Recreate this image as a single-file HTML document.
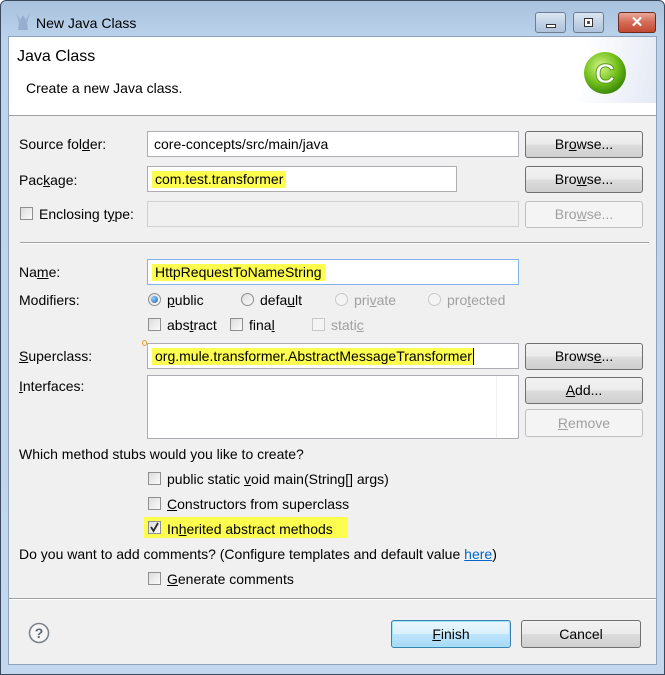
<!DOCTYPE html>
<html><head><meta charset="utf-8"><style>
*{margin:0;padding:0;box-sizing:border-box}
body{width:665px;height:675px;overflow:hidden;font-family:"Liberation Sans",sans-serif;font-size:14px;color:#000;background:#fff}
.win{position:absolute;left:0;top:0;width:665px;height:675px;border:1px solid #3a4a5e;border-radius:6px 6px 0 0;background:linear-gradient(#a9c2dd,#bcd3ec 40px,#c3d8ef);}
.client{position:absolute;left:8px;top:36px;width:649px;height:629px;background:#f0f0f0;border:1px solid #8ea3bd}
.a{position:absolute;white-space:nowrap;line-height:16px}
.field{position:absolute;background:#fff;border:1px solid #abadb3;border-top-color:#abadb3}
.dis{background:#f0f0f0;border-color:#d0d0d0}
.btn{position:absolute;border:1px solid #707070;border-radius:3px;background:linear-gradient(#f2f2f2 0,#ebebeb 50%,#dddddd 50%,#cfcfcf);text-align:center;line-height:24px}
.bdis{border-color:#c0c0c0;background:#f4f4f4;color:#a0a0a0}
.cb{position:absolute;width:13px;height:13px;border:1px solid #8e8f8f;background:linear-gradient(135deg,#dcdcdc,#fbfbfb)}
.rb{position:absolute;width:13px;height:13px;border:1px solid #8e8f8f;border-radius:50%;background:linear-gradient(135deg,#dcdcdc,#fbfbfb)}
.gr{color:#a0a0a0}
.hl{background:#fdfd50}
.sep{position:absolute;left:19px;width:625px;height:2px;border-top:1px solid #a0a0a0;border-bottom:1px solid #fff}
u{text-decoration:underline}
</style></head><body>
<div class="win">
 <svg style="position:absolute;left:13px;top:10px" width="18" height="20"><path d="M2 1 L6 9 L9 4 L12 9 L16 1 L13 12 L14 19 L4 19 L5 12 Z" fill="#8fa8c8" opacity=".8"/></svg>
 <div class="a" style="left:35px;top:14px;font-size:14px">New Java Class</div>
 <div style="position:absolute;left:534px;top:11px;width:31px;height:21px;border:1px solid #6b7d94;border-radius:3px;background:linear-gradient(#dbe6f2,#c3d3e6 50%,#aec2da)"><div style="position:absolute;left:10px;top:11px;width:10px;height:4px;border:1px solid #333;background:#fff"></div></div>
 <div style="position:absolute;left:572px;top:11px;width:31px;height:21px;border:1px solid #6b7d94;border-radius:3px;background:linear-gradient(#dbe6f2,#c3d3e6 50%,#aec2da)"><div style="position:absolute;left:10px;top:5px;width:9px;height:9px;border:1px solid #333;background:#fff"><div style="margin:2px;width:3px;height:3px;background:#555"></div></div></div>
 <div style="position:absolute;left:617px;top:11px;width:38px;height:21px;border:1px solid #6a2a20;border-radius:3px;background:linear-gradient(#e8a79a,#d46a55 50%,#c14a33);color:#fff;font-weight:bold;text-align:center;line-height:19px;font-size:15px">✕</div>
</div>
<div class="client">
 <div style="position:absolute;left:0;top:0;width:647px;height:79px;background:#fff;border-bottom:1px solid #a0a0a0"></div>
 <div style="position:absolute;left:540px;top:0;width:107px;height:66px;background:linear-gradient(100deg,#fff 30%,#e4e9f4)"></div>
 <svg style="position:absolute;left:573px;top:13px" width="46" height="46"><defs><radialGradient id="g" cx="40%" cy="35%" r="65%"><stop offset="0" stop-color="#d6f58a"/><stop offset=".6" stop-color="#74c21c"/><stop offset="1" stop-color="#3d8a0a"/></radialGradient></defs><circle cx="23" cy="23" r="21" fill="url(#g)"/><text x="23" y="33" text-anchor="middle" font-family="Liberation Sans" font-weight="bold" font-size="28" fill="#fff" stroke="#5a9c1a" stroke-width="1">C</text></svg>
 <div class="a" style="left:8px;top:12px;font-size:16px">Java Class</div>
 <div class="a" style="left:17px;top:43px">Create a new Java class.</div>

 <div class="a" style="left:10px;top:99px">Source fol<u>d</u>er:</div>
 <div class="field" style="left:138px;top:94px;width:372px;height:26px"><span class="a" style="left:6px;top:4px">core-concepts/src/main/java</span></div>
 <div class="btn" style="left:516px;top:94px;width:118px;height:27px">Br<u>o</u>wse...</div>

 <div class="a" style="left:10px;top:135px">Pac<u>k</u>age:</div>
 <div class="field" style="left:138px;top:129px;width:310px;height:26px"><span class="a hl" style="left:4px;top:4px;padding:0 3px 1px">com.test.transformer</span></div>
 <div class="btn" style="left:516px;top:129px;width:118px;height:27px">Bro<u>w</u>se...</div>

 <div class="cb" style="left:11px;top:170px"></div>
 <div class="a" style="left:30px;top:169px">Enclosing t<u>y</u>pe:</div>
 <div class="field dis" style="left:138px;top:164px;width:372px;height:26px"></div>
 <div class="btn bdis" style="left:516px;top:164px;width:118px;height:27px">Bro<u>w</u>se...</div>

 <div class="sep" style="left:11px;top:205px;width:629px"></div>

 <div class="a" style="left:10px;top:227px">Na<u>m</u>e:</div>
 <div class="field" style="left:138px;top:222px;width:372px;height:26px;border-color:#7eb4ea"><span class="a hl" style="left:4px;top:4px;padding:0 3px 1px">HttpRequestToNameString</span></div>

 <div class="a" style="left:10px;top:255px">Modifiers:</div>
 <div class="rb" style="left:139px;top:256px"><div style="margin:2px;width:7px;height:7px;border-radius:50%;background:radial-gradient(circle at 35% 35%,#8fd0ff,#1d5fa8)"></div></div>
 <div class="a" style="left:158px;top:255px"><u>p</u>ublic</div>
 <div class="rb" style="left:232px;top:256px"></div>
 <div class="a" style="left:251px;top:255px">defa<u>u</u>lt</div>
 <div class="rb" style="left:326px;top:256px;border-color:#c8c8c8;background:#f4f4f4"></div>
 <div class="a gr" style="left:345px;top:255px">pri<u>v</u>ate</div>
 <div class="rb" style="left:419px;top:256px;border-color:#c8c8c8;background:#f4f4f4"></div>
 <div class="a gr" style="left:438px;top:255px">pro<u>t</u>ected</div>

 <div class="cb" style="left:139px;top:281px"></div>
 <div class="a" style="left:158px;top:280px">abs<u>t</u>ract</div>
 <div class="cb" style="left:221px;top:281px"></div>
 <div class="a" style="left:240px;top:280px">fina<u>l</u></div>
 <div class="cb" style="left:303px;top:281px;border-color:#c8c8c8;background:#f4f4f4"></div>
 <div class="a gr" style="left:322px;top:280px">stati<u>c</u></div>

 <div class="a" style="left:10px;top:311px"><u>S</u>uperclass:</div>
 <div style="position:absolute;left:133px;top:303px;width:5px;height:6px;border-radius:50%;border:1px solid #e0a030"></div>
 <div class="field" style="left:138px;top:306px;width:372px;height:26px"><span class="a hl" style="left:4px;top:4px;padding:0 1px 1px 3px;border-right:1px solid #000">org.mule.transformer.AbstractMessageTransformer</span></div>
 <div class="btn" style="left:516px;top:306px;width:118px;height:27px">Brows<u>e</u>...</div>

 <div class="a" style="left:10px;top:341px"><u>I</u>nterfaces:</div>
 <div class="field" style="left:138px;top:338px;width:372px;height:64px"><div style="position:absolute;left:348px;top:0;width:1px;height:62px;background:#eef0f4"></div></div>
 <div class="btn" style="left:516px;top:340px;width:118px;height:27px"><u>A</u>dd...</div>
 <div class="btn bdis" style="left:516px;top:372px;width:118px;height:28px;line-height:26px"><u>R</u>emove</div>

 <div class="a" style="left:10px;top:409px">Which method stubs would you like to create?</div>
 <div class="cb" style="left:139px;top:435px"></div>
 <div class="a" style="left:158px;top:434px">public static <u>v</u>oid main(String[] args)</div>
 <div class="cb" style="left:139px;top:460px"></div>
 <div class="a" style="left:158px;top:459px"><u>C</u>onstructors from superclass</div>
 <div class="hl" style="position:absolute;left:135px;top:480px;width:204px;height:21px"></div>
 <div class="cb" style="left:139px;top:484px"><svg width="11" height="11" style="position:absolute;left:0;top:0"><path d="M2 5 L4.5 9 L9 1" stroke="#2a2a2a" stroke-width="1.8" fill="none"/></svg></div>
 <div class="a" style="left:158px;top:484px">In<u>h</u>erited abstract methods</div>

 <div class="a" style="left:10px;top:509px">Do you want to add comments? (Configure templates and default value <u style="color:#0066cc">here</u>)</div>
 <div class="cb" style="left:139px;top:535px"></div>
 <div class="a" style="left:158px;top:534px"><u>G</u>enerate comments</div>

 <div class="sep" style="left:0;top:561px;width:647px"></div>

 <svg style="position:absolute;left:19px;top:585px" width="22" height="22"><circle cx="11" cy="11" r="9.5" fill="#f6f6f6" stroke="#7a8088" stroke-width="1.5"/><text x="11" y="16" text-anchor="middle" font-family="Liberation Sans" font-weight="bold" font-size="14" fill="#606870">?</text></svg>
 <div class="btn" style="left:382px;top:583px;width:120px;height:28px;line-height:26px;border-color:#3c7fb1;background:linear-gradient(#eaf6fd,#d9f0fc 50%,#bee6fd 50%,#a7d9f5);box-shadow:inset 0 0 0 1px #9ce5fd"><u>F</u>inish</div>
 <div class="btn" style="left:512px;top:583px;width:120px;height:28px;line-height:26px">Cancel</div>
</div>
</body></html>
